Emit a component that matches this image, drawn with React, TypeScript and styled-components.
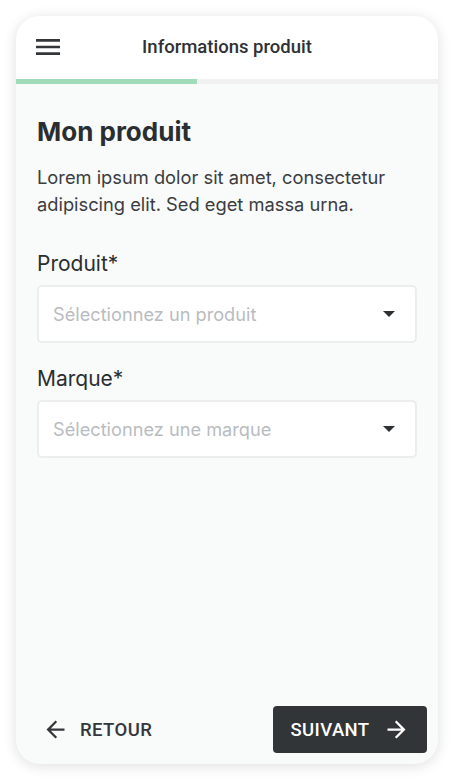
import React from "react";
import styled, { createGlobalStyle } from "styled-components";

const Global = createGlobalStyle`
  html, body { margin: 0; padding: 0; background: #ffffff; }
  * { box-sizing: border-box; }
`;

const Page = styled.div`
  width: 454px;
  height: 780px;
  padding: 16px;
`;

const Card = styled.div`
  width: 422px;
  height: 748px;
  border-radius: 24px;
  background: #f9fafa;
  box-shadow: 0 2px 14px rgba(0, 0, 0, 0.13);
  overflow: hidden;
  display: flex;
  flex-direction: column;
`;

const Header = styled.header`
  height: 63px;
  background: #ffffff;
  display: grid;
  grid-template-columns: 64px 1fr 64px;
  align-items: center;
  padding: 0 0 2px 16px;
`;

const MenuButton = styled.button`
  width: 32px;
  height: 32px;
  padding: 0;
  border: none;
  background: none;
  color: #34373a;
  display: flex;
  align-items: center;
  justify-content: center;
`;

const HeaderTitle = styled.h1`
  margin: 0;
  text-align: center;
  font-family: Roboto, "Liberation Sans", sans-serif;
  font-weight: 500;
  font-size: 18.5px;
  color: #2e3133;
  padding-right: 16px;
  white-space: nowrap;
`;

const Track = styled.div`
  height: 5px;
  background: #f1f1f1;
  display: flex;
`;

const Fill = styled.div`
  height: 100%;
  background: #a0dbba;
`;

const Content = styled.main`
  flex: 1;
  padding: 32px 21px 0 21px;
  display: flex;
  flex-direction: column;
`;

const Title = styled.h2`
  margin: 0;
  font-family: Inter, "Liberation Sans", sans-serif;
  font-weight: 700;
  font-size: 26px;
  line-height: 32px;
  color: #2b2e30;
`;

const Lead = styled.p`
  margin: 16px 0 0 0;
  font-family: Inter, "Liberation Sans", sans-serif;
  font-size: 18.3px;
  line-height: 27px;
  color: #3a3d40;
`;

const Field = styled.div<{ $first?: boolean }>`
  margin-top: ${(p) => (p.$first ? "33px" : "23px")};
  display: flex;
  flex-direction: column;
  gap: 8px;
`;

const Label = styled.label`
  font-family: Inter, "Liberation Sans", sans-serif;
  font-size: 21px;
  line-height: 26px;
  color: #2b2e30;
`;

const Select = styled.div`
  height: 58px;
  border: 2px solid #ebedee;
  border-radius: 5px;
  background: #ffffff;
  display: flex;
  align-items: center;
  justify-content: space-between;
  padding: 0 20px 0 14px;
`;

const Placeholder = styled.span`
  font-family: Inter, "Liberation Sans", sans-serif;
  font-size: 18.2px;
  color: #b9bcbf;
`;

const Footer = styled.footer`
  display: flex;
  align-items: center;
  justify-content: space-between;
  padding: 0 11px 11px 26px;
`;

const BackButton = styled.button`
  display: flex;
  align-items: center;
  gap: 11px;
  border: none;
  background: none;
  padding: 0;
  font-family: Roboto, "Liberation Sans", sans-serif;
  font-weight: 500;
  font-size: 18.5px;
  letter-spacing: 0.4px;
  color: #34373a;
`;

const NextButton = styled.button`
  width: 154px;
  height: 47px;
  display: flex;
  align-items: center;
  justify-content: center;
  gap: 13px;
  border: none;
  border-radius: 4px;
  background: #323538;
  font-family: Roboto, "Liberation Sans", sans-serif;
  font-weight: 500;
  font-size: 18.5px;
  letter-spacing: 0.4px;
  color: #ffffff;
`;

const MenuIcon = () => (
  <svg width="32" height="32" viewBox="0 0 24 24" fill="currentColor">
    <path d="M3 18h18v-2H3v2zm0-5h18v-2H3v2zm0-7v2h18V6H3z" />
  </svg>
);

const Caret = () => (
  <svg width="12" height="6" viewBox="0 0 12 6" fill="#2e3133">
    <path d="M0 0h12L6 6z" />
  </svg>
);

const ArrowLeft = () => (
  <svg width="27" height="27" viewBox="0 0 24 24" fill="currentColor">
    <path d="M20 11H7.83l5.59-5.59L12 4l-8 8 8 8 1.41-1.41L7.83 13H20v-2z" />
  </svg>
);

const ArrowRight = () => (
  <svg width="27" height="27" viewBox="0 0 24 24" fill="currentColor">
    <path d="M12 4l-1.41 1.41L16.17 11H4v2h12.17l-5.58 5.59L12 20l8-8z" />
  </svg>
);

export default function App() {
  const progress = 43;
  return (
    <>
      <Global />
      <Page>
        <Card>
          <Header>
            <MenuButton aria-label="menu">
              <MenuIcon />
            </MenuButton>
            <HeaderTitle>Informations produit</HeaderTitle>
            <span />
          </Header>
          <Track>
            <Fill style={{ width: `${progress}%` }} />
          </Track>
          <Content>
            <Title>Mon produit</Title>
            <Lead>
              Lorem ipsum dolor sit amet, consectetur adipiscing elit. Sed eget
              massa urna.
            </Lead>
            <Field $first>
              <Label>Produit*</Label>
              <Select>
                <Placeholder>Sélectionnez un produit</Placeholder>
                <Caret />
              </Select>
            </Field>
            <Field>
              <Label>Marque*</Label>
              <Select>
                <Placeholder>Sélectionnez une marque</Placeholder>
                <Caret />
              </Select>
            </Field>
          </Content>
          <Footer>
            <BackButton>
              <ArrowLeft />
              RETOUR
            </BackButton>
            <NextButton>
              SUIVANT
              <ArrowRight />
            </NextButton>
          </Footer>
        </Card>
      </Page>
    </>
  );
}
